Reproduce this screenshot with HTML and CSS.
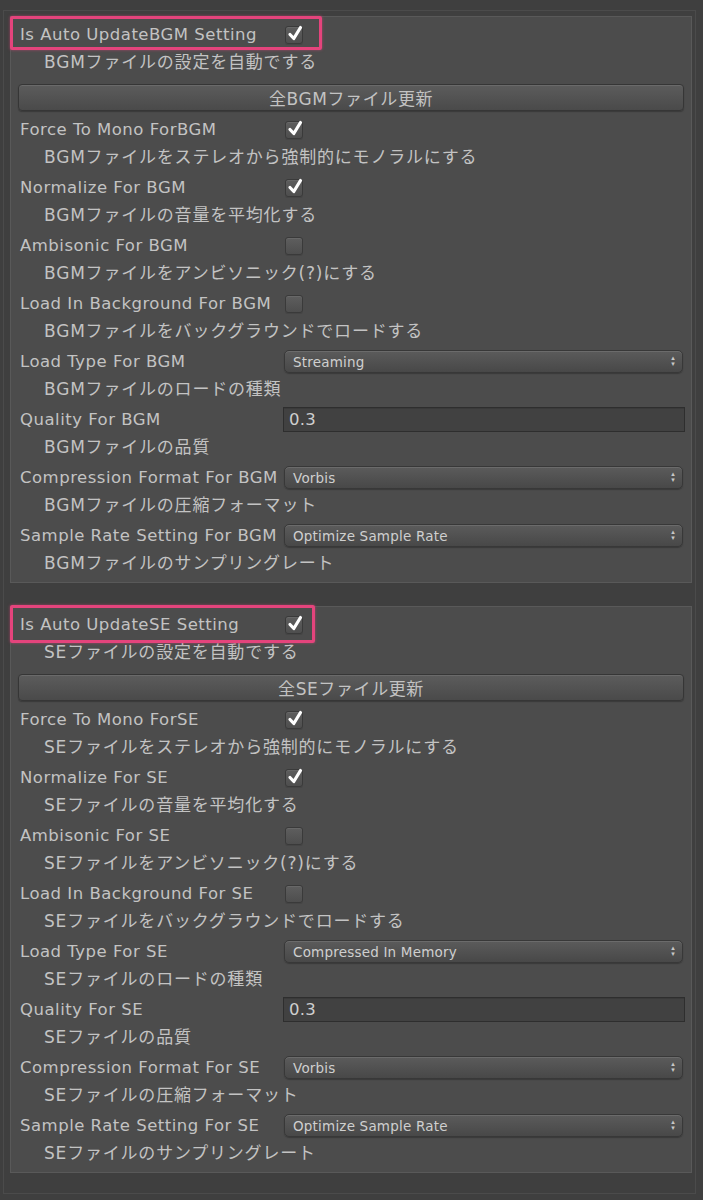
FILE: index.html
```html
<!DOCTYPE html>
<html lang="ja">
<head>
    <meta charset="UTF-8">
    <meta name="viewport" content="width=device-width, initial-scale=1.0">
    <title>Audio Import Settings</title>
    <link rel="stylesheet" href="styles.css">
</head>
<body>
    <div class="frame">
        <!-- BGM -->
        <section class="group">
            <div class="row marked mark-bgm">
                <span class="label">Is Auto UpdateBGM Setting</span>
                <span class="check on"><svg viewBox="0 0 18 18"><path d="M4 9.5 L7.8 13.5 L14.5 2.5"/></svg></span>
            </div>
            <div class="row sub">BGMファイルの設定を自動でする</div>
            <button class="wide-btn">全BGMファイル更新</button>

            <div class="row">
                <span class="label">Force To Mono ForBGM</span>
                <span class="check on"><svg viewBox="0 0 18 18"><path d="M4 9.5 L7.8 13.5 L14.5 2.5"/></svg></span>
            </div>
            <div class="row sub">BGMファイルをステレオから強制的にモノラルにする</div>

            <div class="row">
                <span class="label">Normalize For BGM</span>
                <span class="check on"><svg viewBox="0 0 18 18"><path d="M4 9.5 L7.8 13.5 L14.5 2.5"/></svg></span>
            </div>
            <div class="row sub">BGMファイルの音量を平均化する</div>

            <div class="row">
                <span class="label">Ambisonic For BGM</span>
                <span class="check"></span>
            </div>
            <div class="row sub">BGMファイルをアンビソニック(?)にする</div>

            <div class="row">
                <span class="label">Load In Background For BGM</span>
                <span class="check"></span>
            </div>
            <div class="row sub">BGMファイルをバックグラウンドでロードする</div>

            <div class="row">
                <span class="label">Load Type For BGM</span>
                <span class="popup">Streaming<span class="arrows">▴<br>▾</span></span>
            </div>
            <div class="row sub">BGMファイルのロードの種類</div>

            <div class="row">
                <span class="label">Quality For BGM</span>
                <span class="field">0.3</span>
            </div>
            <div class="row sub">BGMファイルの品質</div>

            <div class="row">
                <span class="label">Compression Format For BGM</span>
                <span class="popup">Vorbis<span class="arrows">▴<br>▾</span></span>
            </div>
            <div class="row sub">BGMファイルの圧縮フォーマット</div>

            <div class="row">
                <span class="label">Sample Rate Setting For BGM</span>
                <span class="popup">Optimize Sample Rate<span class="arrows">▴<br>▾</span></span>
            </div>
            <div class="row sub">BGMファイルのサンプリングレート</div>
        </section>

        <!-- SE -->
        <section class="group">
            <div class="row marked mark-se">
                <span class="label">Is Auto UpdateSE Setting</span>
                <span class="check on"><svg viewBox="0 0 18 18"><path d="M4 9.5 L7.8 13.5 L14.5 2.5"/></svg></span>
            </div>
            <div class="row sub">SEファイルの設定を自動でする</div>
            <button class="wide-btn">全SEファイル更新</button>

            <div class="row">
                <span class="label">Force To Mono ForSE</span>
                <span class="check on"><svg viewBox="0 0 18 18"><path d="M4 9.5 L7.8 13.5 L14.5 2.5"/></svg></span>
            </div>
            <div class="row sub">SEファイルをステレオから強制的にモノラルにする</div>

            <div class="row">
                <span class="label">Normalize For SE</span>
                <span class="check on"><svg viewBox="0 0 18 18"><path d="M4 9.5 L7.8 13.5 L14.5 2.5"/></svg></span>
            </div>
            <div class="row sub">SEファイルの音量を平均化する</div>

            <div class="row">
                <span class="label">Ambisonic For SE</span>
                <span class="check"></span>
            </div>
            <div class="row sub">SEファイルをアンビソニック(?)にする</div>

            <div class="row">
                <span class="label">Load In Background For SE</span>
                <span class="check"></span>
            </div>
            <div class="row sub">SEファイルをバックグラウンドでロードする</div>

            <div class="row">
                <span class="label">Load Type For SE</span>
                <span class="popup">Compressed In Memory<span class="arrows">▴<br>▾</span></span>
            </div>
            <div class="row sub">SEファイルのロードの種類</div>

            <div class="row">
                <span class="label">Quality For SE</span>
                <span class="field">0.3</span>
            </div>
            <div class="row sub">SEファイルの品質</div>

            <div class="row">
                <span class="label">Compression Format For SE</span>
                <span class="popup">Vorbis<span class="arrows">▴<br>▾</span></span>
            </div>
            <div class="row sub">SEファイルの圧縮フォーマット</div>

            <div class="row">
                <span class="label">Sample Rate Setting For SE</span>
                <span class="popup">Optimize Sample Rate<span class="arrows">▴<br>▾</span></span>
            </div>
            <div class="row sub">SEファイルのサンプリングレート</div>
        </section>
    </div>
</body>
</html>
```

FILE: styles.css
```css
body {
    margin: 0;
    background: #3f3f3f;
    font-family: 'DejaVu Sans', 'Noto Sans CJK JP', sans-serif;
    font-size: 16.5px;
    letter-spacing: 0.5px;
    color: #c3c3c3;
}
.frame {
    width: 693px;
    margin: 10px 0 0 3px;
    padding: 5px 5px 20px 6px;
    border: 1px solid #4b4b4b;
    box-sizing: border-box;
}
.group {
    width: 682px;
    box-sizing: border-box;
    background: #4c4c4c;
    border: 1px solid #595959;
    padding: 3px 8px 3px 9px;
}
.group + .group {
    margin-top: 23px;
}
.row {
    height: 29px;
    box-sizing: border-box;
    display: flex;
    align-items: center;
    white-space: nowrap;
}
.row.sub {
    padding: 0 0 7px 24px;
    font-size: 17px;
    letter-spacing: 0.8px;
}
.label {
    width: 264px;
    flex: none;
}
.marked {
    position: relative;
}
.marked::after {
    content: "";
    position: absolute;
    left: -10px;
    top: -4px;
    height: 34px;
    box-sizing: border-box;
    border: 3px solid #e4447c;
    border-radius: 2px;
    box-shadow: 0 0 3px rgba(228, 68, 124, 0.6);
}
.mark-bgm::after {
    width: 312px;
}
.mark-se::after {
    top: -5px;
    height: 38px;
    width: 305px;
}
.check {
    position: relative;
    width: 18px;
    height: 18px;
    margin-left: 1px;
    box-sizing: border-box;
    border-radius: 3px;
    background: linear-gradient(#5e5e5e, #4e4e4e);
    border: 1px solid #3a3a3a;
    box-shadow: inset 0 1px 0 #686868, 0 1px 0 #454545;
}
.check svg {
    position: absolute;
    left: 0;
    top: -2px;
    width: 18px;
    height: 18px;
    fill: none;
    stroke: #ffffff;
    stroke-width: 3.2;
    stroke-linecap: round;
    stroke-linejoin: round;
}
.wide-btn {
    display: block;
    width: 666px;
    height: 27px;
    margin: 6px 0 4px -2px;
    padding: 0 0 8px;
    border: 1px solid #363636;
    border-radius: 4px;
    background: linear-gradient(#5c5c5c, #4a4a4a);
    box-shadow: inset 0 1px 0 #6a6a6a, 0 1px 1px #3a3a3a;
    font-family: 'DejaVu Sans', 'Noto Sans CJK JP', sans-serif;
    font-size: 17px;
    letter-spacing: 0.6px;
    color: #c3c3c3;
}
.popup {
    position: relative;
    flex: 1;
    height: 23px;
    box-sizing: border-box;
    padding-left: 8px;
    display: flex;
    align-items: center;
    border: 1px solid #383838;
    border-radius: 5px;
    background: linear-gradient(#5b5b5b, #484848);
    box-shadow: inset 0 1px 0 #6b6b6b, 0 1px 1px #3a3a3a;
    font-size: 13.5px;
    letter-spacing: 0.2px;
    color: #cfcfcf;
}
.arrows {
    position: absolute;
    right: 7px;
    top: 4px;
    font-size: 7px;
    line-height: 6px;
    color: #c8c8c8;
}
.field {
    flex: 1;
    height: 25px;
    margin: 0 -2px 0 -1px;
    box-sizing: border-box;
    padding-left: 5px;
    display: flex;
    align-items: center;
    background: #414141;
    border: 1px solid #2e2e2e;
    box-shadow: inset 0 1px 0 #3a3a3a;
    color: #cfcfcf;
    letter-spacing: 0.3px;
}
```
